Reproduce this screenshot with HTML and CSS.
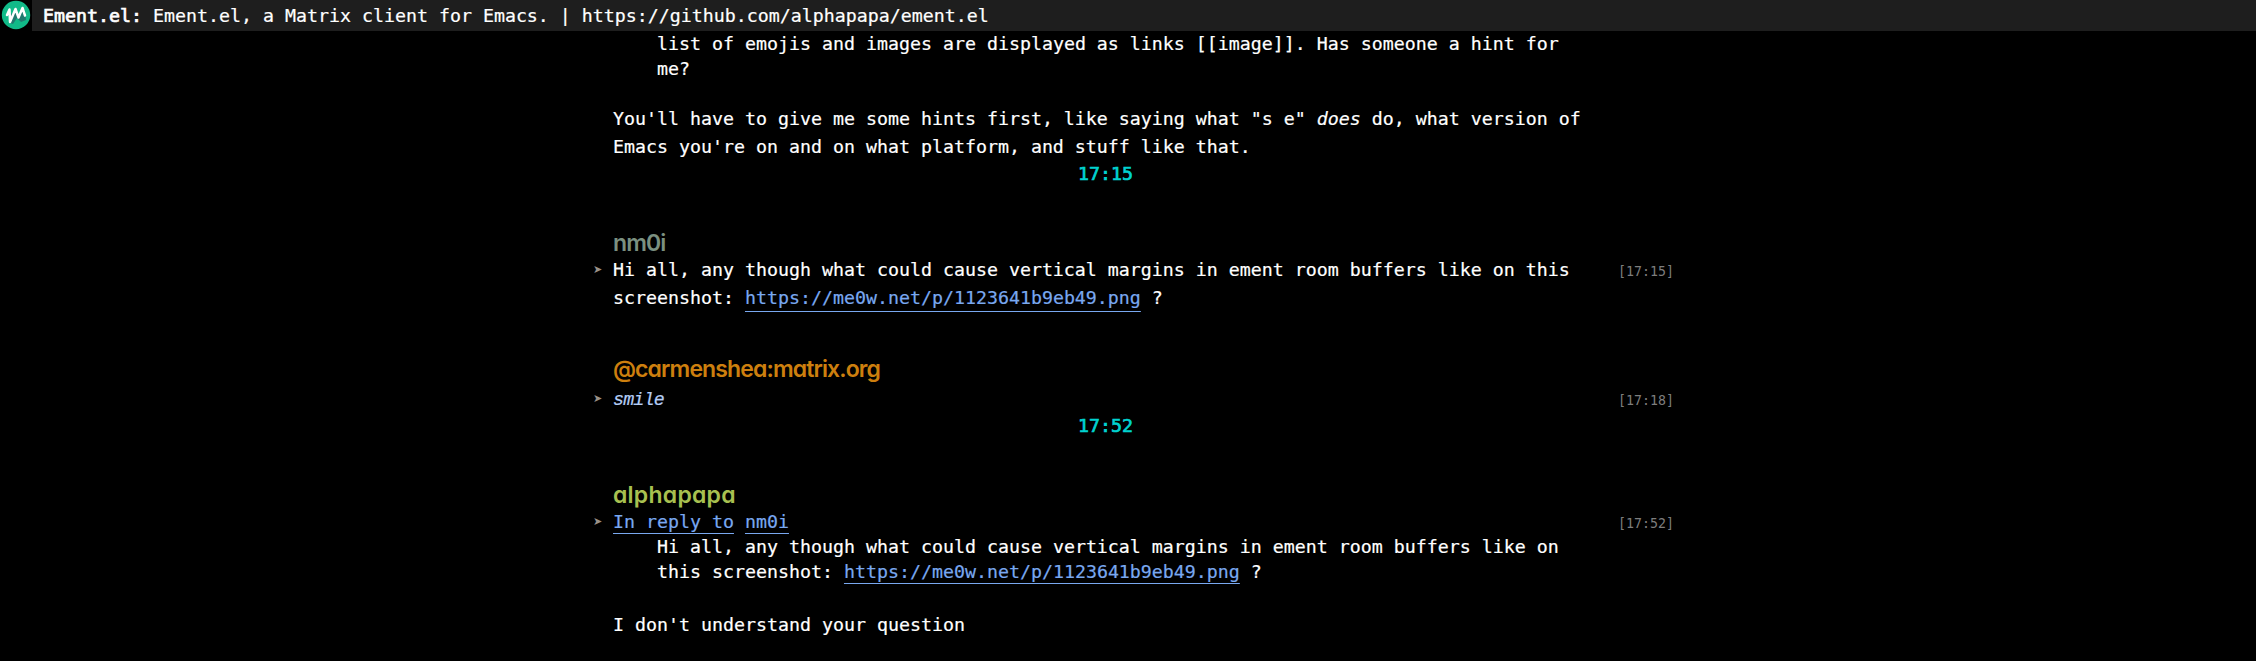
FILE: index.html
```html
<!DOCTYPE html>
<html lang="en">
<head>
<meta charset="utf-8">
<title>Ement.el</title>
<link rel="stylesheet" href="styles.css">
</head>
<body>
<header class="topic">
  <span class="avatar"><svg viewBox="0 0 32 31" width="32" height="31"><circle cx="16" cy="15" r="14.2" fill="#11ba88"/><path d="M10 23L11 14 17 10 19 15 25 10 26 20 21 22 17 18 13 24z" fill="#22786f"/><path d="M7 15L9.500 9.500L10 22L15.500 9L18.500 17.500L22.500 8L25 15.500" fill="none" stroke="#fff" stroke-width="2.500" stroke-linecap="round" stroke-linejoin="round"/></svg></span>
  <div class="title"><b>Ement.el:</b> Ement.el, a Matrix client for Emacs. | https://github.com/alphapapa/ement.el</div>
</header>
<main class="buffer">
  <section class="message">
    <div class="quote">
      <div class="line">list of emojis and images are displayed as links [[image]]. Has someone a hint for</div>
      <div class="line">me?</div>
    </div>
    <div class="line after-quote">You'll have to give me some hints first, like saying what "s e" <em>does</em> do, what version of</div>
    <div class="line wrapped">Emacs you're on and on what platform, and stuff like that.</div>
  </section>
  <div class="line divider">17:15</div>
  <section class="message">
    <h2 class="name sage">nm0i</h2>
    <div class="row"><span class="arrow">➤</span><div class="line">Hi all, any though what could cause vertical margins in ement room buffers like on this</div><time class="stamp">[17:15]</time></div>
    <div class="line wrapped">screenshot: <a class="link low">https://me0w.net/p/1123641b9eb49.png</a> ?</div>
  </section>
  <section class="message second">
    <h2 class="name orange">@carmenshea:matrix.org</h2>
    <div class="row reaction"><span class="arrow">➤</span><div class="line emote">smile</div><time class="stamp">[17:18]</time></div>
  </section>
  <div class="line divider">17:52</div>
  <section class="message">
    <h2 class="name green">alphapapa</h2>
    <div class="row"><span class="arrow">➤</span><div class="line"><a class="link">In reply to</a> <a class="link">nm0i</a></div><time class="stamp">[17:52]</time></div>
    <div class="quote">
      <div class="line">Hi all, any though what could cause vertical margins in ement room buffers like on</div>
      <div class="line">this screenshot: <a class="link">https://me0w.net/p/1123641b9eb49.png</a> ?</div>
    </div>
    <div class="line answer">I don't understand your question</div>
  </section>
</main>
</body>
</html>
```
FILE: styles.css
```css
* { box-sizing: border-box; }
body {
  margin: 0;
  height: 661px;
  overflow: hidden;
  background: #000;
  color: #fff;
  font-family: "DejaVu Sans Mono", monospace;
  font-size: 18.27px;
}
.topic { display: flex; height: 31px; background: #1e1e1e; }
.avatar { width: 32px; height: 31px; background: #000; }
.avatar svg { display: block; }
.title { line-height: 31px; padding-left: 11px; white-space: pre; -webkit-text-stroke: 0.2px; }
.title b { font-weight: 400; -webkit-text-stroke: 0.7px; }
.buffer { padding-left: 613px; }
.line { line-height: 25px; white-space: pre; -webkit-text-stroke: 0.2px; }
.quote { padding-left: 44px; }
.after-quote { margin-top: 25px; }
.wrapped { margin-top: 3px; }
.divider { margin-top: 2px; padding-left: 465px; color: #00d3d0; -webkit-text-stroke: 0.7px; }
.name {
  margin: 0;
  padding-top: 42px;
  height: 71px;
  line-height: 30px;
  font-family: Inter, sans-serif;
  font-feature-settings: "cv11";
  font-size: 23px;
  font-weight: 600;
  white-space: pre;
}
.sage { color: #7b9080; letter-spacing: -0.9px; }
.orange { color: #cd7f0e; letter-spacing: -0.88px; }
.green { color: #a8c050; letter-spacing: 0.25px; }
.second .name { padding-top: 44px; height: 73px; }
.row { display: grid; grid-template-columns: 33px 1005px auto; margin-left: -33px; }
.arrow { padding-left: 13px; font-family: "DejaVu Sans", sans-serif; font-size: 11px; line-height: 25px; height: 25px; color: #9a9088; }
.stamp { font-size: 13.28px; line-height: 29px; height: 25px; color: #7d7d7d; }
.reaction { padding-top: 3px; }
.emote { height: 25px; line-height: 28px; font-family: "Liberation Mono", monospace; font-style: italic; font-size: 18.3px; letter-spacing: -0.8px; color: #b4cdf5; }
.link {
  color: #79a8f0;
  text-decoration: underline;
  text-decoration-thickness: 1px;
  text-underline-offset: 5px;
  text-decoration-skip-ink: none;
}
.low { text-underline-offset: 7px; }
.answer { margin-top: 28px; }
```
